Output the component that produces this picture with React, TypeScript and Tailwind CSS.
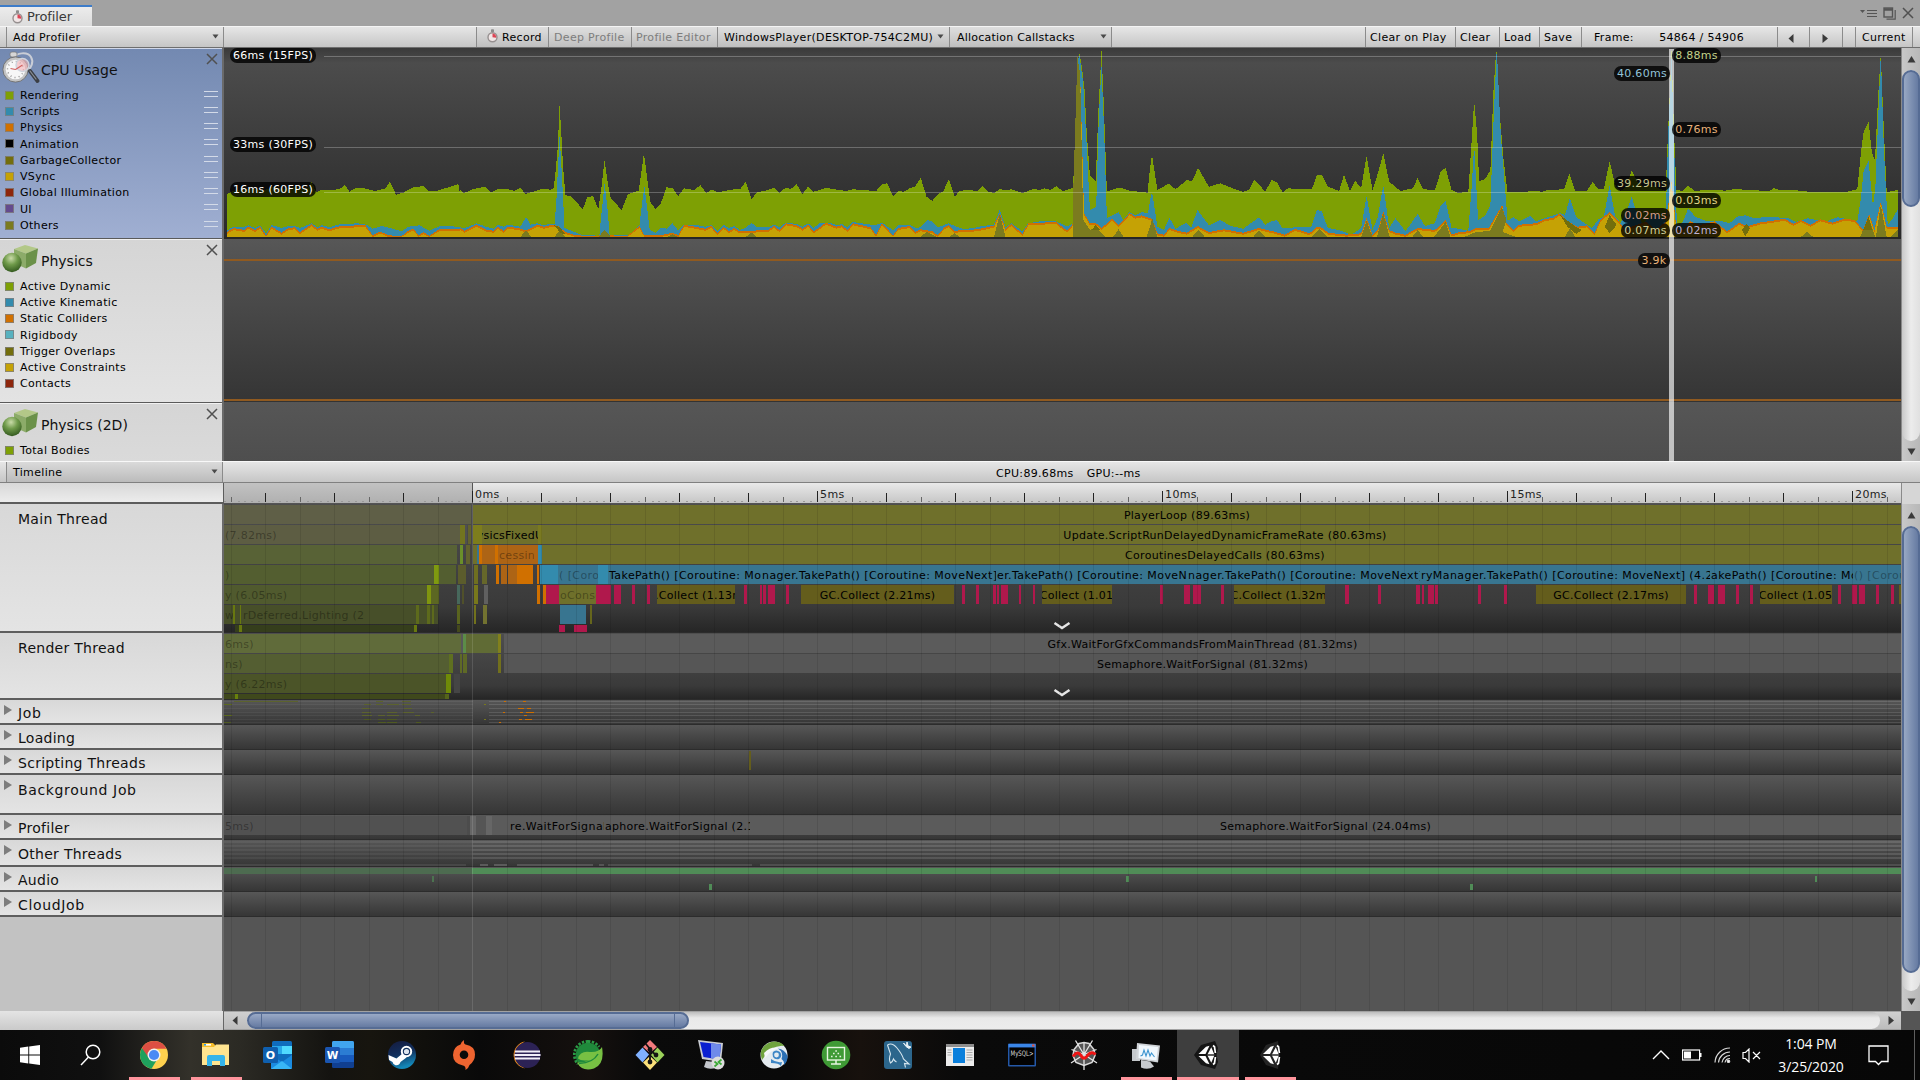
import React from "react";

/* ------------------------------------------------------------------ */
/* Shared pieces                                                       */
/* ------------------------------------------------------------------ */

const CANVAS_X = 224;
const MS = 69;
const ZERO = 472.1;

function Caret({ className = "" }: { className?: string }) {
  return (
    <svg width="7" height="5" viewBox="0 0 7 5" className={className}>
      <path d="M0.5 0.5h6L3.5 4.5z" fill="#4a4a4a" />
    </svg>
  );
}

function Arrow({ dir }: { dir: "up" | "down" | "left" | "right" }) {
  const d = {
    up: "M0.5 7.5h8L4.5 1z",
    down: "M0.5 1.5h8L4.5 8z",
    left: "M6.5 0v9L1.5 4.5z",
    right: "M2.5 0v9L8 4.5z",
  }[dir];
  return (
    <svg width="9" height="9" viewBox="0 0 9 9" className="shrink-0">
      <path d={d} fill="#3a3a3a" />
    </svg>
  );
}

function Stopwatch() {
  return (
    <svg width="11" height="14" viewBox="0 0 11 14" className="shrink-0">
      <rect x="4" y="0.3" width="3" height="3" rx="0.8" fill="#8c8c8c" />
      <circle cx="5.5" cy="8.200" r="4.500" fill="#f0e6e6" stroke="#969090" strokeWidth="1.400" />
      <path d="M5.500 8.200V4.400A3.800 3.800 0 0 1 9.200 8.800z" fill="#dd4455" />
    </svg>
  );
}

function CpuIcon() {
  return (
    <svg width="38" height="34" viewBox="0 0 38 34" className="shrink-0">
      <path d="M12 7C14 2 25 0 29 6c3 5 0 11-3 13" fill="none" stroke="#c9cdd6" strokeWidth="2" />
      <rect x="8" y="1" width="7" height="5" rx="2" fill="#d6d6d6" stroke="#777" strokeWidth="0.7" />
      <circle cx="13.500" cy="18.500" r="12.600" fill="#c4c4c4" stroke="#6d6d6d" strokeWidth="0.9" />
      <circle cx="13.500" cy="18.500" r="9.800" fill="#f7f7f7" />
      <circle cx="13.500" cy="18.500" r="8" fill="none" stroke="#777" strokeWidth="1.400" strokeDasharray="0.8 3.4" />
      <circle cx="20.500" cy="14" r="6.500" fill="#f3b0b6" fillOpacity="0.6" stroke="#cfd4dd" strokeWidth="1.400" />
      <path d="M13.500 18.500l7-4.500M13.500 18.500l-5-1" stroke="#d06060" strokeWidth="1.100" />
      <path d="M28 20l7.500 10" stroke="#3b3e44" strokeWidth="3.800" strokeLinecap="round" />
      <path d="M28 20l6 8" stroke="#8b8f96" strokeWidth="1.200" strokeLinecap="round" />
    </svg>
  );
}

function PhysicsIcon() {
  return (
    <svg width="37" height="30" viewBox="0 0 37 30" className="shrink-0">
      <defs>
        <radialGradient id="ball" cx="0.45" cy="0.28" r="0.75">
          <stop offset="0" stopColor="#c9dba8" />
          <stop offset="0.45" stopColor="#6f9a4a" />
          <stop offset="1" stopColor="#2f551c" />
        </radialGradient>
      </defs>
      <path d="M12 5L23 1l13 3.500-12 5z" fill="#b3c888" />
      <path d="M12 5l12 4.500v15L12 19z" fill="#8cab69" />
      <path d="M24 9.500l12-5L34 19 24 24.500z" fill="#6b9149" />
      <circle cx="10" cy="18.500" r="9.700" fill="url(#ball)" />
    </svg>
  );
}

function ThinCross({ size = 12 }: { size?: number }) {
  return (
    <svg width={size} height={size} viewBox="0 0 12 12">
      <path d="M1 1l10 10M11 1L1 11" stroke="#505050" strokeWidth="1.5" />
    </svg>
  );
}

/* ------------------------------------------------------------------ */
/* Window header and toolbar                                           */
/* ------------------------------------------------------------------ */

function TitleBar() {
  return (
    <div className="flex h-[26px] shrink-0 items-end justify-between bg-[#a2a2a2]">
      <div className="flex h-[21px] w-[92px] items-center gap-[4px] border-t-2 border-[#3d7cc9] bg-linear-to-b from-[#ececec] to-[#dcdcdc] pl-3 text-[13px] tracking-[-0.1px] text-[#3a3a3a]">
        <Stopwatch />
        <span>Profiler</span>
      </div>
      <div className="flex h-[26px] items-center gap-[6px] pr-[6px]">
        <svg width="17" height="9" viewBox="0 0 17 9">
          <path d="M0 1h5L2.500 4z" fill="#555" />
          <path d="M7 1.500h10M7 4.500h10M7 7.500h10" stroke="#555" strokeWidth="1" />
        </svg>
        <svg width="13" height="13" viewBox="0 0 13 13">
          <path d="M3.500 12.200h8.700V3" fill="none" stroke="#555" strokeWidth="1.200" />
          <rect x="1" y="1" width="8.500" height="9" fill="#a2a2a2" stroke="#555" strokeWidth="1.400" />
          <path d="M1 2.500h8.500" stroke="#555" strokeWidth="2.500" />
        </svg>
        <ThinCross size={12} />
      </div>
    </div>
  );
}

const barFill = "bg-linear-to-b from-[#e6e6e6] to-[#c6c6c6]";

function Cell({ className, children }: { className: string; children?: React.ReactNode }) {
  return (
    <div className={"flex h-full shrink-0 items-center overflow-hidden border-r border-[#8b8b8b] pt-[2px] whitespace-nowrap " + className}>
      {children}
    </div>
  );
}

function Toolbar() {
  return (
    <div className={"flex h-[22px] shrink-0 border-t border-b border-t-[#f4f4f4] border-b-[#6e6e6e] text-[11px] tracking-[0.32px] text-black " + barFill}>
      <Cell className="w-[7px]" />
      <Cell className="w-[217px] justify-between pr-[4px] pl-[6px]">
        <span>Add Profiler</span>
        <Caret className="-mt-[4px]" />
      </Cell>
      <Cell className="w-[253px]" />
      <Cell className="w-[72px] gap-[4px] bg-black/3 pl-[10px]">
        <span className="-mt-[4px]"><Stopwatch /></span>
        <span>Record</span>
      </Cell>
      <Cell className="w-[83px] bg-black/3 pl-[5px] text-[#7d7d7d]">Deep Profile</Cell>
      <Cell className="w-[86px] bg-black/3 pl-[4px] text-[#7d7d7d]">Profile Editor</Cell>
      <Cell className="w-[232px] justify-between bg-black/3 pr-[5px] pl-[6px]">
        <span>WindowsPlayer(DESKTOP-754C2MU)</span>
        <Caret className="-mt-[4px]" />
      </Cell>
      <Cell className="w-[162px] justify-between bg-black/3 pr-[4px] pl-[7px] tracking-[0.22px]">
        <span>Allocation Callstacks</span>
        <Caret className="-mt-[4px]" />
      </Cell>
      <Cell className="w-[254px]" />
      <Cell className="w-[90px] pl-[4px]">Clear on Play</Cell>
      <Cell className="w-[44px] pl-[4px]">Clear</Cell>
      <Cell className="w-[40px] pl-[4px]">Load</Cell>
      <Cell className="w-[42px] pl-[4px]">Save</Cell>
      <Cell className="w-[196px] justify-between pr-[33px] pl-[12px]">
        <span>Frame:</span>
        <span>54864 / 54906</span>
      </Cell>
      <Cell className="w-[32px] pl-[9px]"><Arrow dir="left" /></Cell>
      <Cell className="w-[33px] pl-[10px]"><Arrow dir="right" /></Cell>
      <Cell className="w-[13px]" />
      <Cell className="w-[57px] pl-[6px]">Current</Cell>
    </div>
  );
}

/* ------------------------------------------------------------------ */
/* Legend column                                                       */
/* ------------------------------------------------------------------ */

const cpuLegend = [
  ["Rendering", "#7ea004"],
  ["Scripts", "#338bad"],
  ["Physics", "#d17000"],
  ["Animation", "#000000"],
  ["GarbageCollector", "#736e0c"],
  ["VSync", "#c5a205"],
  ["Global Illumination", "#8e260c"],
  ["UI", "#644a8e"],
  ["Others", "#7b7b1f"],
];

const physicsLegend = [
  ["Active Dynamic", "#7ea004"],
  ["Active Kinematic", "#338bad"],
  ["Static Colliders", "#d17000"],
  ["Rigidbody", "#57b1bf"],
  ["Trigger Overlaps", "#736e0c"],
  ["Active Constraints", "#c5a205"],
  ["Contacts", "#8e260c"],
];

function Module({ title, icon, legend, grips, className }: {
  title: string;
  icon: React.ReactNode;
  legend: string[][];
  grips?: boolean;
  className: string;
}) {
  return (
    <div className={"relative shrink-0 overflow-hidden border-t border-b border-t-white/50 border-b-[#5a5a5a] " + className}>
      <div className="flex h-[38px] items-center gap-px pl-[2px]">
        <div className="flex h-[36px] w-[38px] items-center">{icon}</div>
        <span className="pt-[4px] text-[14px] text-[#111]">{title}</span>
      </div>
      <div className="absolute top-[4px] right-[4px]"><ThinCross /></div>
      <div>
        {legend.map(([name, color]) => (
          <div key={name} className="flex h-[16.25px] items-center pl-[5px] text-[11px] tracking-[0.32px]">
            <span className="mr-[6px] h-[9px] w-[9px] border border-[#808080]/80" style={{ backgroundColor: color }} />
            <span className="flex-1 pt-[2px]">{name}</span>
            {grips && (
              <span className="mr-[4px] mb-[3px] h-[6px] w-[14px] border-t border-b border-[#d3dae8]" />
            )}
          </div>
        ))}
      </div>
    </div>
  );
}

function ModuleColumn() {
  return (
    <div className="flex w-[224px] shrink-0 flex-col overflow-hidden border-r-2 border-[#6a6a6a] bg-[#d8d8d8]">
      <Module title="CPU Usage" icon={<CpuIcon />} legend={cpuLegend} grips
        className="h-[191px] bg-linear-to-b from-[#7389b1] to-[#a0afd2]" />
      <Module title="Physics" icon={<PhysicsIcon />} legend={physicsLegend}
        className="h-[164px] bg-linear-to-b from-[#d5d5d5] to-[#e3e3e3]" />
      <Module title="Physics (2D)" icon={<PhysicsIcon />} legend={[["Total Bodies", "#7ea004"]]}
        className="h-[164px] bg-linear-to-b from-[#d5d5d5] to-[#e3e3e3]" />
    </div>
  );
}

/* ------------------------------------------------------------------ */
/* CPU chart                                                           */
/* ------------------------------------------------------------------ */

/* Each run is an origin, a horizontal sample density, and "x,y" samples (three units per pixel vertically). */
type Run = [number, number, string];

const renderingRuns: Run[] = [
  [0, 3, "681,583 700,572 720,570 760,566 790,572 820,560 850,568 880,562 920,568 935,545 948,577 965,570 985,570 1018,568 1035,554 1048,575 1068,564 1090,564 1125,573 1155,566 1170,545 1188,584 1210,578 1240,562 1272,558 1285,573 1308,573 1345,562 1375,552 1379,577"],
  [460, 2.24, "0,570 8,580 28,568 57,560 70,577 85,568 108,568 122,573 135,564 147,582 185,566 202,569 210,564 214,515 219,440 223,312 227,400 231,500 236,585 250,590 275,628 285,592 298,588 310,628 317,560 324,480 330,540 337,592 362,630 376,583 400,572 407,510 412,460 418,520 426,605 438,628 450,610 462,562 476,564 489,588 502,565 524,570 539,556 552,580 564,568 577,577 614,568 627,568 640,546 653,597 665,577 690,570 703,563 716,579 729,563 741,567 754,552 767,583 779,560 792,575 820,564 866,573 880,568 932,573 945,553 957,550 970,588 982,573 994,575 1007,565 1019,560 1032,533 1045,590 1058,603 1070,583 1083,573 1095,537 1108,590 1120,572 1145,570 1158,574 1170,558 1184,575 1196,579 1210,567 1222,571 1234,568 1260,579 1285,567 1298,570 1310,565 1323,570 1336,558 1350,574 1373,563 1377,460 1382,320 1387,155 1394,210 1399,270 1404,400 1411,525 1424,545 1430,330 1437,152 1442,310 1449,575 1475,563 1490,567 1500,572 1540,578 1546,500"],
  [1150, 2.036, "4,465 15,570 38,551 52,568 75,540 86,543 98,504 120,560 143,550 165,563 190,576 203,568 212,538 235,575 247,540 258,546 270,577 282,564 296,568 330,566 340,524 350,526 362,560 385,573 395,524 407,573 418,543 430,563 441,468 453,570 464,520 475,460 487,545 510,573 535,565 545,534 556,568 580,570 592,514 602,504 614,570 625,578 648,577 655,420 660,303 666,400 670,543 682,538 693,510 699,280 705,144 712,340 720,480 728,577 760,577 775,573 800,575 810,570 843,568 854,520 866,574 890,572 901,546 913,567 924,568 936,483 947,555 958,573 970,560 981,510 992,545 1004,560 1015,555 1027,560 1050,573 1054,420 1062,148 1067,400 1072,570 1085,573 1096,557 1108,572 1155,570 1170,572 1190,567 1220,570 1260,573 1270,565 1285,571 1310,570 1340,575 1420,575 1440,568 1448,450 1453,395 1463,366 1470,460 1476,480 1482,300 1488,162 1493,350 1500,577 1522,570"],
];

const scriptRuns: Run[] = [
  [0, 3, "681,692 700,680 735,680 745,676 765,684 780,676 798,700 815,675 845,684 865,678 885,678 900,684 935,670 952,682 965,676 990,682 1010,674 1072,670 1100,674 1118,686 1145,678 1170,684 1205,694 1225,680 1258,676 1288,692 1320,678 1378,680"],
  [460, 2.24, "0,682 10,685 37,670 62,682 75,686 85,674 97,680 108,674 135,680 148,651 158,674 173,670 188,676 202,671 212,672 216,600 223,405 229,540 234,684 260,698 275,706 300,706 312,708 317,640 324,550 330,620 335,704 375,706 390,694 402,674 407,620 413,558 418,610 425,690 438,698 452,682 462,686 476,670 489,692 500,674 525,674 550,680 563,676 577,692 590,674 602,684 614,678 627,690 640,684 653,668 665,682 690,682 703,674 716,682 730,668 755,672 767,680 780,670 792,684 806,668 830,668 843,676 855,672 868,682 880,666 930,676 945,668 958,680 970,690 982,676 1007,674 1020,684 1032,682 1046,660 1058,664 1070,682 1095,670 1108,678 1130,688 1158,682 1170,678 1196,674 1209,630 1222,682 1235,670 1260,694 1273,670 1300,664 1335,664 1360,680 1373,670 1376,540 1383,200 1387,160 1396,250 1404,440 1411,630 1425,620 1431,350 1437,200 1443,400 1449,655 1475,637 1486,660 1500,636 1512,646 1527,636 1541,640 1546,600"],
  [1150, 2.036, "4,574 15,680 28,690 40,654 52,686 74,668 84,682 97,630 120,676 143,660 165,678 190,686 222,652 235,674 247,664 258,660 270,684 328,680 340,630 350,634 362,684 385,690 410,704 430,684 441,588 453,690 464,650 475,555 487,684 500,655 520,694 545,642 560,678 580,670 592,616 602,603 614,684 628,686 648,692 655,560 660,435 668,660 682,648 693,615 699,380 706,144 714,400 728,662 740,652 752,664 774,648 786,664 805,654 835,640 845,645 855,594 868,652 880,664 900,684 913,658 924,650 936,555 947,650 958,668 970,640 981,588 992,650 1004,670 1027,640 1050,660 1055,400 1062,170 1066,400 1073,680 1085,665 1096,625 1110,650 1130,662 1160,662 1180,670 1195,650 1212,646 1230,655 1260,650 1300,655 1315,665 1340,655 1375,665 1400,652 1440,664 1447,600 1453,510 1463,484 1472,620 1477,560 1483,340 1488,162 1494,440 1502,674 1510,660 1522,630"],
];

const physicsRuns: Run[] = [
  [0, 3, "681,696 700,684 735,690 745,680 765,690 780,680 798,706 815,680 845,698 865,684 885,682 900,696 935,673 952,686 965,680 990,688 1010,680 1072,676 1095,674 1118,706 1140,694 1165,706 1205,708 1225,692 1240,686 1256,706 1270,696 1288,708 1320,686 1378,688"],
  [460, 2.24, "0,684 10,692 37,674 60,690 75,692 85,680 97,692 108,680 130,684 148,692 173,674 188,680 202,676 212,674 222,680 236,696 260,706 300,708 315,706 324,690 333,706 375,708 402,678 413,706 450,706 476,698 489,706 502,674 550,686 563,678 577,700 590,680 602,694 614,684 627,694 653,692 690,690 703,678 716,690 730,670 755,676 767,686 780,674 792,694 820,668 843,680 855,676 868,690 880,670 920,682 932,706 945,670 970,706 982,684 1007,678 1020,696 1032,688 1058,694 1070,706 1085,682 1095,676 1108,692 1160,688 1185,680 1196,678 1209,640 1222,686 1235,672 1260,702 1273,670 1335,666 1360,692 1373,672 1378,460 1384,170 1390,260 1398,640 1411,670 1425,670 1437,684 1461,656 1475,676 1500,640 1512,650 1527,646 1545,655"],
  [1150, 2.036, "4,656 15,700 28,704 40,684 60,694 75,698 97,678 120,696 150,688 190,698 222,684 250,694 275,704 295,686 325,700 340,680 352,684 362,698 400,704 430,700 441,654 453,705 464,690 475,635 487,690 500,698 520,704 545,684 580,690 602,660 614,704 630,696 650,694 665,684 690,684 705,645 717,615 725,668 740,690 752,674 774,672 790,668 805,656 820,655 835,640 852,665 870,680 890,676 905,700 917,660 936,635 955,665 970,695 980,680 1010,665 1030,690 1050,665 1062,545 1072,690 1085,690 1100,664 1120,675 1150,664 1175,694 1200,668 1215,680 1240,668 1260,664 1293,656 1310,672 1325,660 1345,674 1365,658 1390,668 1415,656 1435,660 1452,690 1464,642 1475,690 1488,605 1500,680 1522,680"],
];

const otherRuns: Run[] = [
  [460, 2.24, "135,711 148,690 160,711"],
  [460, 2.24, "212,711 222,692 236,711"],
  [460, 2.24, "310,711 324,690 338,711"],
  [460, 2.24, "465,711 476,702 489,711"],
  [460, 2.24, "640,711 653,698 665,711"],
  [460, 2.24, "1030,711 1046,696 1068,711"],
  [460, 2.24, "1095,711 1108,700 1120,711"],
  [460, 2.24, "1196,711 1209,642 1222,711"],
  [460, 2.24, "1374,711 1374,560 1383,170 1389,220 1396,660 1411,690 1425,680 1445,711"],
  [460, 2.24, "1463,711 1475,688 1487,711"],
  [460, 2.24, "1538,711 1551,656 1562,711"],
  [1150, 2.036, "0,711 4,662 15,711"],
  [1150, 2.036, "86,711 98,690 112,711"],
  [1150, 2.036, "210,711 222,690 235,711"],
  [1150, 2.036, "328,711 345,688 362,711"],
  [1150, 2.036, "430,711 441,662 453,711"],
  [1150, 2.036, "462,711 475,640 488,711"],
  [1150, 2.036, "534,711 545,690 556,711"],
  [1150, 2.036, "578,711 602,666 612,711"],
  [1150, 2.036, "640,711 665,695 692,694 716,622 726,660 718,696 745,711"],
  [1150, 2.036, "845,711 855,684 866,711"],
  [1150, 2.036, "1325,711 1338,695 1350,711"],
  [1150, 2.036, "1446,711 1463,650 1476,711"],
  [1150, 2.036, "1478,711 1488,615 1500,711"],
  [1150, 2.036, "1508,711 1522,690 1522,711"],
];

const collectorRuns: Run[] = [
  [460, 2.24, "210,676 222,680 236,702 226,700"],
  [460, 2.24, "1415,690 1424,674 1434,690"],
  [1150, 2.036, "835,645 870,684 880,690 868,702 850,680"],
  [1150, 2.036, "926,680 936,645 950,675 936,700"],
  [1150, 2.036, "1205,690 1214,672 1222,685 1212,708"],
  [1150, 2.036, "1452,690 1463,650 1470,690"],
];

function points(runs: Run[], drop = 0) {
  return runs.flatMap(([origin, density, samples]) =>
    samples.split(" ").map((s) => {
      const [x, y] = s.split(",").map(Number);
      return (origin + x / density).toFixed(1) + "," + Math.min(237, (y + drop) / 3).toFixed(1);
    })
  ).join(" ");
}

function CpuChart() {
  const area = (runs: Run[], drop = 0) => "227,237 " + points(runs, drop) + " 1897.5,237";
  return (
    <svg width="1677" height="190" viewBox="224 48 1677 190" className="block" shapeRendering="crispEdges">
      <polygon points={area(renderingRuns)} fill="#7ea004" />
      <polygon points={area(scriptRuns)} fill="#338bad" />
      <polygon points={area(physicsRuns)} fill="#d17000" />
      <polygon points={area(physicsRuns, 6)} fill="#c5a205" />
      {otherRuns.map((r, i) => <polygon key={i} points={points([r])} fill="#7b7b1f" />)}
      {collectorRuns.map((r, i) => <polygon key={i} points={points([r])} fill="#736e0c" />)}
      <path d="M324 56.500H1901M324 147.500H1901M324 192.500H1901" stroke="#ffffff" strokeOpacity="0.25" />
    </svg>
  );
}

function Pill({ children, className }: { children: React.ReactNode; className: string }) {
  return (
    <span className={"absolute flex h-[15px] items-center justify-center rounded-[7px] bg-black/80 pt-[2px] text-[11px] tracking-[0.3px] whitespace-nowrap " + className}>
      {children}
    </span>
  );
}

function Charts() {
  return (
    <div className="relative flex-1 overflow-hidden bg-[#555]">
      <div className="h-[191px] border-b-2 border-[#262626] bg-linear-to-b from-[#3a3a3a] via-[#4c4c4c] via-8% to-[#2a2a2a]">
        <CpuChart />
      </div>
      <div className="flex h-[163px] flex-col justify-between border-b border-[#333] bg-linear-to-b from-[#575757] to-[#353535] pt-[20px]">
        <div className="h-[2px] bg-[#905a20]" />
        <div className="h-[2px] bg-[#905a20]" />
      </div>
      <div className="h-[60px] bg-linear-to-b from-[#565656] to-[#4e4e4e]" />

      <div className="absolute top-[1px] left-[1445px] h-full w-[5px] bg-white/65" />
      <Pill className="top-0 left-[6px] w-[86px] text-white">66ms (15FPS)</Pill>
      <Pill className="top-[89px] left-[6px] w-[86px] text-white">33ms (30FPS)</Pill>
      <Pill className="top-[134px] left-[6px] w-[86px] text-white">16ms (60FPS)</Pill>
      <Pill className="top-0 left-[1448px] w-[49px] text-[#c3d28a]">8.88ms</Pill>
      <Pill className="top-[74px] left-[1448px] w-[49px] text-[#e8b279]">0.76ms</Pill>
      <Pill className="top-[145px] left-[1448px] w-[49px] text-[#e0d589]">0.03ms</Pill>
      <Pill className="top-[175px] left-[1448px] w-[49px] text-[#beb1d3]">0.02ms</Pill>
      <Pill className="top-[18px] left-[1390px] w-[56px] text-[#92c3d8]">40.60ms</Pill>
      <Pill className="top-[128px] left-[1390px] w-[56px] text-[#c6c48c]">39.29ms</Pill>
      <Pill className="top-[160px] left-[1397px] w-[49px] text-[#d29c8c]">0.02ms</Pill>
      <Pill className="top-[175px] left-[1397px] w-[49px] text-[#cfcf98]">0.07ms</Pill>
      <Pill className="top-[205px] left-[1414px] w-[32px] text-[#e8b279]">3.9k</Pill>
    </div>
  );
}

function VScroll({ thumb, tail }: { thumb: string; tail: string }) {
  return (
    <div className="flex w-[19px] shrink-0 flex-col items-center border-l border-[#8a8a8a] bg-linear-to-r from-[#c8c8c8] to-[#b8b8b8]">
      <div className="flex h-[22px] items-center"><Arrow dir="up" /></div>
      <div className={"w-full rounded-[9px] bg-linear-to-r from-[#c9c9c9] via-[#ececec] to-[#e0e0e0] " + tail}>
        <div className={"w-full rounded-[9px] border-2 border-[#566c94] bg-linear-to-r from-[#98a8c3] to-[#667ba2] " + thumb} />
      </div>
      <div className="flex flex-1 items-center"><Arrow dir="down" /></div>
    </div>
  );
}

/* ------------------------------------------------------------------ */
/* Timeline                                                            */
/* ------------------------------------------------------------------ */

function TimelineToolbar() {
  return (
    <div className={"flex h-[22px] shrink-0 border-t border-b border-t-[#f8f8f8] border-b-[#808080] text-[11px] tracking-[0.33px] " + barFill}>
      <Cell className="w-[7px]" />
      <Cell className="w-[216px] justify-between bg-black/5 pr-[4px] pl-[6px]">
        <span className="pt-px">Timeline</span>
        <Caret className="-mt-[3px]" />
      </Cell>
      <div className="flex flex-1 items-center gap-[13px] pt-[5px] pl-[773px]">
        <span>CPU:89.68ms</span>
        <span>GPU:--ms</span>
      </div>
    </div>
  );
}

function Ruler() {
  const ticks = [];
  for (let i = -36; i <= 206; i++) {
    const x = Math.round(ZERO + (i * MS) / 10) - CANVAS_X;
    const h = i % 50 === 0 ? 11 : i % 10 === 0 ? 9 : i % 5 === 0 ? 5 : 1;
    ticks.push(
      <span key={i} className={"absolute bottom-[1px] " + (h === 1 ? "bg-[#999]" : h === 5 ? "bg-[#666]" : "bg-[#222]")}
        style={{ left: x, height: h, width: h > 1 ? 1 : 2 }} />
    );
  }
  return (
    <div className="flex h-[21px] shrink-0">
      <div className="w-[224px] border-r border-b-2 border-[#5c5c5c] bg-linear-to-b from-[#d8d8d8] to-[#ececec]" />
      <div className="relative flex-1 border-b border-[#555] bg-linear-to-b from-[#e9e9e9] to-[#c6c6c6]">
        <div className="absolute top-0 left-0 h-full w-[249px] border-r border-[#555] bg-linear-to-b from-[#c2c2c2] to-[#b0b0b0]" />
        {ticks}
        {[0, 5, 10, 15, 20].map((t) => (
          <span key={t} className="absolute top-[5px] text-[11px] leading-[14px] tracking-[0.3px] text-[#222]"
            style={{ left: ZERO + t * MS + 3 - CANVAS_X }}>{t}ms</span>
        ))}
      </div>
      <div className="w-[19px] border-l border-[#8a8a8a] bg-[#d6d6d6]" />
    </div>
  );
}

/* start x, end x, colour, optional label, optional flags ("d" dimmed, "l" left aligned, "w" wide spacing) */
type Bar = [number, number, string, string?, string?];

const OLIVE = "#6f702b";
const LEAF = "#586236";
const BLUE = "#387590";
const GC = "#645d1c";
const PINK = "#b0184c";
const ORANGE = "#d07000";
const RUST = "#ad6415";
const GREY = "#5b5b5b";

const pinkSpans: [number, number][] = [
  [546, 559], [596, 611], [614, 621], [632, 635], [647, 650], [744, 747], [760, 762], [763, 766], [768, 775], [786, 789],
  [962, 965], [976, 979], [993, 996], [997, 999], [1001, 1008], [1019, 1021], [1033, 1035], [1160, 1163], [1184, 1190],
  [1193, 1201], [1221, 1224], [1345, 1349], [1378, 1381], [1416, 1420], [1422, 1424], [1428, 1434], [1435, 1438],
  [1478, 1481], [1504, 1507], [1694, 1697], [1708, 1714], [1718, 1725], [1736, 1739], [1750, 1753], [1838, 1841],
  [1852, 1857], [1859, 1865], [1876, 1879], [1891, 1894],
];

const mainRows: Bar[][] = [
  [[224, 471, "#5f5f47"], [473, 1901, OLIVE, "PlayerLoop (89.63ms)"]],
  [[224, 460, "#5d5d43", "(7.82ms)", "dl"], [460, 465, "#72741f"], [465, 467, "#505050"], [468, 471, "#62622e"],
    [473, 482, "#7d7d1c"], [482, 538, OLIVE, "ysicsFixedU"], [538, 542, "#7a7a20"], [542, 1908, OLIVE, "Update.ScriptRunDelayedDynamicFrameRate (80.63ms)"]],
  [[224, 457, LEAF], [460, 463, "#6a8f2a"], [466, 470, "#62622e"], [473, 477, OLIVE], [477, 479, BLUE], [479, 482, ORANGE], [482, 496, RUST], [495, 498, ORANGE],
    [498, 534, RUST, "cessin", "dl"], [534, 538, RUST], [538, 542, "#338bad"], [542, 1908, OLIVE, "CoroutinesDelayedCalls (80.63ms)"]],
  [[224, 434, "#535e30", ")", "dl"], [434, 439, "#7f9a10"], [439, 456, "#535e30"], [458, 466, "#5b5c2c"], [474, 478, "#6f6f20"], [482, 487, "#66672a"],
    [496, 499, ORANGE], [501, 507, RUST], [508, 517, RUST], [517, 533, ORANGE], [537, 539, ORANGE],
    [540, 558, "#338bad"], [558, 598, BLUE, "( [Coroutine", "dlw"], [598, 608, "#338bad"],
    [608, 761, BLUE, "TakePath() [Coroutine: MoveNext", "lw"],
    [761, 996, BLUE, "nager.TakePath() [Coroutine: MoveNext]", "lw"],
    [996, 1187, BLUE, "er.TakePath() [Coroutine: MoveNext]", "lw"],
    [1187, 1420, BLUE, "nager.TakePath() [Coroutine: MoveNext]", "lw"],
    [1420, 1710, BLUE, "ryManager.TakePath() [Coroutine: MoveNext] (4.25ms)", "lw"],
    [1710, 1853, BLUE, "akePath() [Coroutine: MoveNext]", "lw"],
    [1853, 1901, BLUE, "() [Coroutine", "dlw"]],
  [[224, 427, "#505a2e", "y (6.05ms)", "dl"], [427, 431, "#7f950f"], [431, 439, "#5c6722"], [457, 460, "#47685c"], [462, 464, "#50502a"],
    [474, 478, "#78781c"], [484, 488, "#606060"], [537, 540, ORANGE], [543, 546, ORANGE],
    [559, 596, OLIVE, "oConso", "dl"],
    ...pinkSpans.map(([a, b]): Bar => [a, b, PINK]),
    [657, 735, GC, "GC.Collect (1.13ms)"], [801, 954, GC, "GC.Collect (2.21ms)"], [1042, 1112, GC, "GC.Collect (1.01ms)"],
    [1234, 1325, GC, "GC.Collect (1.32ms)"], [1536, 1686, GC, "GC.Collect (2.17ms)"], [1760, 1832, GC, "GC.Collect (1.05ms)"], [1899, 1901, GC]],
  [[224, 438, "#474f29"], [224, 233, "#474f29", "wn", "dl"], [233, 235, "#68780f"], [240, 241, "#68780f"], [242, 364, "transparent", "rDeferred.Lighting (2", "dl"],
    [416, 419, "#5d6a1c"], [427, 430, "#5d6a1c"], [432, 434, "#5d6a1c"], [457, 460, "#5a641f"], [474, 476, "#72721c"], [483, 487, "#727230"],
    [560, 586, BLUE], [590, 592, "#66661c"]],
  [[235, 417, "#353e1c"], [239, 242, "#68780f"], [414, 417, "#68780f"], [457, 460, "#44491c"], [559, 565, PINK], [574, 587, PINK]],
];

const renderRows: Bar[][] = [
  [[224, 461, "#606b3a", "6ms)", "dl"], [461, 463, "#585858"], [463, 466, "#5c8c48"], [466, 498, "#606b35"], [498, 501, "#82801c"], [504, 1901, GREY, "Gfx.WaitForGfxCommandsFromMainThread (81.32ms)"]],
  [[224, 449, "#545e32", "ns)", "dl"], [449, 453, "#5f7020"], [460, 462, "#5f6a26"], [463, 467, "#5f6a26"], [498, 501, "#72701c"], [504, 1901, "#565656", "Semaphore.WaitForSignal (81.32ms)"]],
  [[224, 446, "#4b5428", "y (6.22ms)", "dl"], [446, 451, "#6f8a08"], [454, 460, "#454545"]],
  [[224, 449, "#3f481c"], [235, 238, "#68800c"], [445, 449, "#55641a"]],
];

const profilerRow: Bar[][] = [[
  [224, 467, "#515151", "5ms)", "dl"], [467, 472, "#4c4c4c"], [470, 476, "#666"], [476, 486, "#555"], [486, 492, "#666"], [492, 509, GREY],
  [509, 604, GREY, "re.WaitForSignal (1.4", "lw"], [604, 750, GREY, "aphore.WaitForSignal (2.1", "l"],
  [750, 1901, GREY, "Semaphore.WaitForSignal (24.04ms)"],
]];

function Rows({ rows }: { rows: Bar[][] }) {
  return (
    <>
      {rows.map((row, r) => (
        <div key={r} className="relative mb-px h-[19px] w-full shrink-0">
          {row.map(([a, b, color, label, flags = ""], i) => (
            <div key={i}
              className={"absolute top-0 flex h-full items-center overflow-hidden pt-[3px] text-[11px] whitespace-nowrap " +
                (flags.includes("l") ? "justify-start pl-px " : "justify-center ") +
                (flags.includes("w") ? "tracking-[0.42px] " : "tracking-[0.28px] ") +
                (flags.includes("d") ? "text-black/35" : "text-black")}
              style={{ left: a - CANVAS_X, width: b - a, backgroundColor: color }}>
              {label && <span className="shrink-0">{label}</span>}
            </div>
          ))}
        </div>
      ))}
    </>
  );
}

const jobDashRows: [number, [number, number, string][]][] = [
  [1, [[234, 298, "#5c632e"], [376, 383, "#5c632e"], [402, 411, "#5c632e"], [504, 506, ORANGE], [523, 526, ORANGE]]],
  [4, [[224, 232, "#5c6a1e"], [364, 371, "#5c632e"], [376, 383, "#5c632e"], [387, 399, "#5c632e"], [402, 411, "#5c632e"], [484, 486, "#78781c"]]],
  [8, [[362, 370, "#5c632e"], [404, 412, "#5c632e"], [518, 524, ORANGE], [527, 531, ORANGE]]],
  [12, [[362, 371, "#5c632e"], [387, 397, "#5c632e"], [403, 414, "#5c632e"], [431, 434, "#5c632e"], [503, 505, ORANGE], [520, 523, ORANGE], [526, 534, ORANGE]]],
  [15, [[224, 232, "#5c6a1e"], [362, 372, "#5c632e"], [378, 385, "#5c632e"], [387, 399, "#5c632e"], [415, 420, "#5c632e"], [524, 527, ORANGE]]],
  [19, [[364, 371, "#4f5a22"], [378, 385, "#4f5a22"], [387, 397, "#4f5a22"], [484, 486, "#78781c"], [519, 522, ORANGE], [525, 532, ORANGE]]],
  [22, [[224, 231, "#4f5a22"], [378, 386, "#4f5a22"], [387, 397, "#4f5a22"], [416, 421, "#4f5a22"], [499, 501, ORANGE]]],
];

function Stripes({ ys, height, from = 0 }: { ys: number[]; height: number; from?: number }) {
  return (
    <>
      {ys.map((y) => (
        <React.Fragment key={y}>
          <span className="absolute left-0 w-[249px] bg-white/5" style={{ top: y, height }} />
          <span className="absolute right-0 bg-white/12" style={{ top: y, height, left: 249 + from }} />
        </React.Fragment>
      ))}
    </>
  );
}

function Mark({ x, w, y, h, color }: { x: number; w: number; y: number; h: number; color: string }) {
  return <span className="absolute" style={{ left: x - CANVAS_X, width: w, top: y, height: h, backgroundColor: color }} />;
}

function MoreChevron({ className }: { className: string }) {
  return (
    <svg width="18" height="10" viewBox="0 0 18 10" className={"absolute left-[829px] " + className}>
      <path d="M1.500 2l7.500 5 7.500-5" fill="none" stroke="#e6e6e6" strokeWidth="2.400" />
    </svg>
  );
}

const threads: { name: string; height: number; fold: boolean; pad: number; wide?: boolean; dark?: boolean; body?: React.ReactNode }[] = [
  { name: "Main Thread", height: 129, fold: false, pad: 6, dark: true, body: <><div className="pt-px"><Rows rows={mainRows} /></div><MoreChevron className="bottom-px" /></> },
  { name: "Render Thread", height: 67, fold: false, pad: 6, dark: true, body: <><div className="pt-px"><Rows rows={renderRows} /></div><MoreChevron className="bottom-px" /></> },
  {
    name: "Job", height: 25, fold: true, pad: 4, wide: true,
    body: <>
      <Stripes ys={[1, 4, 8, 12, 15, 19, 22]} height={1} from={16} />
      {jobDashRows.flatMap(([y, spans]) => spans.map(([a, b, c]) => <Mark key={y + "-" + a} x={a} w={b - a} y={y} h={1} color={c} />))}
    </>,
  },
  { name: "Loading", height: 25, fold: true, pad: 4 },
  { name: "Scripting Threads", height: 25, fold: true, pad: 4, body: <Mark x={749} w={2} y={1} h={19} color="#645d1c" /> },
  { name: "Background Job", height: 40, fold: true, pad: 6, wide: true },
  { name: "Profiler", height: 25, fold: true, pad: 4, body: <div className="pt-px"><Rows rows={profilerRow} /></div> },
  {
    name: "Other Threads", height: 27, fold: true, pad: 5,
    body: <>
      <Stripes ys={[1, 5, 9, 13, 17]} height={2} />
      {[[224, 466, "#474747"], [480, 488, GREY], [494, 507, GREY], [517, 593, "#555"], [599, 604, "#555"], [608, 752, "#4e4e4e"], [760, 1901, "#4e4e4e"]].map(([a, b, c]) => (
        <Mark key={String(a)} x={Number(a)} w={Number(b) - Number(a)} y={24} h={2} color={String(c)} />
      ))}
    </>,
  },
  {
    name: "Audio", height: 25, fold: true, pad: 4,
    body: <>
      <Mark x={224} w={248} y={1} h={6} color="#4d6b50" />
      <Mark x={472} w={1429} y={1} h={6} color="#508c57" />
      <Mark x={432} w={2} y={9} h={6} color="#4c7350" />
      <Mark x={709} w={3} y={17} h={6} color="#508c57" />
      <Mark x={1126} w={3} y={9} h={6} color="#508c57" />
      <Mark x={1470} w={3} y={17} h={6} color="#508c57" />
      <Mark x={1815} w={2} y={9} h={6} color="#508c57" />
    </>,
  },
  { name: "CloudJob", height: 25, fold: true, pad: 4, wide: true },
];

function Timeline() {
  const grid = [];
  for (let i = -7; i <= 41; i++) grid.push(Math.round(ZERO + (i * MS) / 2) - CANVAS_X);
  return (
    <div className="flex h-[507px] shrink-0">
      <div className="w-[224px] shrink-0 border-r-2 border-[#6a6a6a] bg-[#c2c2c2]">
        {threads.map((t) => (
          <div key={t.name} className="flex items-start border-b-2 border-[#5e5e5e] bg-linear-to-b from-[#d8d8d8] to-[#e4e4e4]" style={{ height: t.height }}>
            <span className="w-[18px] shrink-0 pt-[6px] pl-[3px]">
              {t.fold && (
                <svg width="9" height="10" viewBox="0 0 9 10" className="-mt-px"><path d="M1 0v10l8-5z" fill="#7d7d7d" /></svg>
              )}
            </span>
            <span className={"text-[14px] leading-[18px] whitespace-nowrap text-[#111] " + (t.wide ? "tracking-[0.65px]" : "tracking-[0.28px]")} style={{ paddingTop: t.pad }}>{t.name}</span>
          </div>
        ))}
      </div>
      <div className="relative flex-1 overflow-hidden bg-[#555]">
        {threads.map((t) => (
          <div key={t.name} style={{ height: t.height }}
            className={"relative overflow-hidden border-b border-[#2c2c2c] " +
              (t.dark
                ? "bg-linear-to-b from-[#4e4e4e] via-[#3a3a3a] via-80% to-[#262626]"
                : "bg-linear-to-b from-[#575757] to-[#363636]")}>
            {t.body}
          </div>
        ))}
        {grid.map((x) => (
          <span key={x} className={"absolute top-0 h-full w-px " + (x === 248 ? "bg-white/12" : "bg-black/9")} style={{ left: x }} />
        ))}
      </div>
      <VScroll tail="h-[465px]" thumb="h-[447px]" />
    </div>
  );
}

function HScroll() {
  return (
    <div className="flex h-[19px] shrink-0">
      <div className="w-[224px] border-r border-[#666] bg-linear-to-b from-[#e4e4e4] to-[#cacaca]" />
      <div className="flex flex-1 items-center border-t border-b border-[#a2a2a2] bg-linear-to-b from-[#d0d0d0] to-[#bcbcbc]">
        <div className="flex w-[23px] justify-center"><Arrow dir="left" /></div>
        <div className="h-full flex-1 rounded-[9px] bg-linear-to-b from-[#bdbdbd] via-[#e9e9e9] via-35% to-[#ececec]">
          <div className="flex h-full w-[442px] justify-between rounded-[9px] border-2 border-[#566c94] bg-linear-to-b from-[#99a9c6] to-[#667ba2] px-[12px]">
            <span className="w-px bg-[#566c94]" />
            <span className="w-px bg-[#566c94]" />
          </div>
        </div>
        <div className="flex w-[21px] justify-center"><Arrow dir="right" /></div>
      </div>
      <div className="w-[19px] bg-[#555]" />
    </div>
  );
}

/* ------------------------------------------------------------------ */
/* Taskbar                                                             */
/* ------------------------------------------------------------------ */

const ico = { width: 30, height: 30, viewBox: "0 0 30 30" };

const UnityMark = ({ small = false }: { small?: boolean }) => (
  <svg {...ico}>
    {small
      ? <path d="M5 15L11 5l12-4 1.500 14L23 29l-12-4z" fill="#242424" />
      : <path d="M1 15L8 5l14-4 3 7-1.500 7L25 22l-3 7-14-4z" fill="#151515" />}
    <g fill="#fff" transform={small ? "translate(2.500 0)" : ""}>
      <path d="M5.500 14l7.500-7.300 3.500-.9-4 8.200z" />
      <path d="M5.500 16l7.500 7.300 3.500.9-4-8.200z" />
      <path d="M18.300 7.200l3.200 7.800-3.200 7.800L14.200 15z" />
    </g>
    <path d="M14 15h8" stroke="#1b1b1b" strokeWidth="1.400" transform={small ? "translate(2.500 0)" : ""} />
    <path d="M20 5.500l1.500 1.300.9 6.200M20 24.500l1.500-1.300.9-6.200" stroke="#fff" strokeWidth="1.700" fill="none" transform={small ? "translate(2 0)" : ""} />
  </svg>
);

const icons: { id: string; open?: boolean; active?: boolean; art: React.ReactNode }[] = [
  {
    id: "chrome", open: true, art: (
      <svg {...ico}>
        <circle cx="15" cy="15" r="14" fill="#fdd04e" />
        <path d="M15 15L2.900 8A14 14 0 0 0 12.500 28.800L19 18z" fill="#1fa15d" />
        <path d="M2.900 8A14 14 0 0 1 27.500 8.700H15a6.300 6.300 0 0 0-6 8z" fill="#dd4f43" />
        <circle cx="15" cy="15" r="6.500" fill="#f1f1f1" />
        <circle cx="15" cy="15" r="5.100" fill="#4a8af4" />
      </svg>
    ),
  },
  {
    id: "explorer", open: true, art: (
      <svg {...ico}>
        <path d="M1 3h11l2 2v4H1z" fill="#f5bd2c" />
        <path d="M1 7h12l2-2.500h13V25H1z" fill="#ffe48f" />
        <rect x="3" y="4" width="7" height="1.600" fill="#fff" />
        <rect x="3" y="4" width="2" height="1.600" fill="#2c9bdc" />
        <path d="M6 26v-9q0-2 2-2h14q2 0 2 2v9h-5v-5h-8v5z" fill="#35b4ea" />
      </svg>
    ),
  },
  {
    id: "outlook", art: (
      <svg {...ico}>
        <rect x="9" y="1" width="20" height="27" rx="1.500" fill="#0f6cbd" />
        <rect x="9" y="6" width="10" height="8" fill="#28a8ea" />
        <rect x="19" y="6" width="10" height="8" fill="#50d9ff" />
        <path d="M8 15l11 7 10-7v12.500q0 1.500-1.500 1.500H8z" fill="#1a8be0" />
        <path d="M8 29l11-8 10 8z" fill="#38b6f5" />
        <rect x="0" y="7" width="15" height="16" rx="1.500" fill="#0f5fae" />
        <text x="7.500" y="19" fontSize="11" fontWeight="700" textAnchor="middle" fill="#fff">O</text>
      </svg>
    ),
  },
  {
    id: "word", art: (
      <svg {...ico}>
        <rect x="7" y="1" width="22" height="27" rx="1.500" fill="#103f91" />
        <path d="M7 2.500Q7 1 8.500 1h19Q29 1 29 2.500V8H7z" fill="#41a5ee" />
        <rect x="7" y="8" width="22" height="7" fill="#2b7cd3" />
        <rect x="7" y="15" width="22" height="7" fill="#185abd" />
        <rect x="0" y="7" width="15" height="16" rx="1.500" fill="#1a55b0" />
        <text x="7.500" y="19" fontSize="10.500" fontWeight="700" textAnchor="middle" fill="#fff">W</text>
      </svg>
    ),
  },
  {
    id: "steam", art: (
      <svg {...ico}>
        <defs><linearGradient id="stm" x1="0" y1="0" x2="0.300" y2="1"><stop offset="0" stopColor="#151a3d" /><stop offset="0.550" stopColor="#12305e" /><stop offset="1" stopColor="#1387b8" /></linearGradient></defs>
        <circle cx="15" cy="15" r="14" fill="url(#stm)" />
        <path d="M1.500 15l8 3.500 6-5 4 4-6 4.500q-1.500 4-5 3.200Q6 24.500 5.500 22L2 20z" fill="#fff" />
        <circle cx="19.500" cy="11.500" r="4.700" fill="#12305e" stroke="#fff" strokeWidth="2" />
        <circle cx="19.500" cy="11.500" r="2.600" fill="#dfe6ee" />
      </svg>
    ),
  },
  {
    id: "origin", art: (
      <svg {...ico}>
        <path fillRule="evenodd" d="M15 0q-3 2-3.500 4.500Q4 7 4 15q0 8.500 10 10.500 3 .5 2.500 4.500Q20 27.500 20.500 25 26 21 26 14.500 26 6 16.500 4.500 14.500 4 15 0zM15 10.500a4.300 4.300 0 1 1 0 8.600 4.300 4.300 0 0 1 0-8.600z" fill="#ee6430" />
      </svg>
    ),
  },
  {
    id: "eclipse", art: (
      <svg {...ico}>
        <path d="M14 1.500A13.700 13.700 0 0 0 14 28.500 15 15 0 0 1 14 1.500z" fill="#f7941e" />
        <circle cx="16.500" cy="15" r="13" fill="#2c2255" />
        <path d="M4 11.500h25M3.500 15h26M4 18.500h25" stroke="#f1eef8" strokeWidth="1.900" />
      </svg>
    ),
  },
  {
    id: "spring", art: (
      <svg {...ico}>
        <path d="M15 1.500A13.300 13.300 0 0 0 5 24" fill="none" stroke="#2a9a45" strokeWidth="2.800" strokeDasharray="2.400 1.400" />
        <path d="M15 1.500A13.300 13.300 0 0 1 26 7" fill="none" stroke="#2a9a45" strokeWidth="2.800" strokeDasharray="2.400 1.400" />
        <circle cx="15" cy="15" r="12.300" fill="#1f8a3b" />
        <path d="M29 7Q32 24 21 28.500 9 32 4 22.500 10 23 17 20 8 21.500 5 18.500 7 10.500 17 12 26 12.500 29 7z" fill="#77c043" />
        <path d="M6 23.500Q20 23 25 14" stroke="#1f8a3b" strokeWidth="1.500" fill="none" />
      </svg>
    ),
  },
  {
    id: "git", art: (
      <svg {...ico}>
        <path d="M15 0l7 7-7 6-7-6z" fill="#f27a7d" />
        <path d="M7.500 7.500L14 14.500 7.500 22.500.5 15z" fill="#80b1ff" />
        <path d="M22.500 7.500L29.500 15l-7 7.500L16 15z" fill="#9bd15a" />
        <path d="M15 16l7 6.500L15 30l-7-7.500z" fill="#fbe07a" />
        <path d="M10.500 3.500L15 9v13M15 10l6 5" stroke="#141414" strokeWidth="1.900" fill="none" />
        <circle cx="15" cy="9.500" r="2.400" fill="#141414" /><circle cx="21" cy="15" r="2.400" fill="#141414" /><circle cx="15" cy="22" r="2.400" fill="#141414" />
      </svg>
    ),
  },
  {
    id: "remote", art: (
      <svg {...ico}>
        <path d="M1 0l25 3-2 19L5 19z" fill="#c9ccd2" />
        <path d="M3 2l21 2.500-1.500 15L6.500 17z" fill="#0a1fd0" />
        <path d="M14 3.300l10 1.200-1.500 15-8.500-1.400z" fill="#6f8aea" />
        <path d="M9 21l8 1 2 6q-7 2-12-1z" fill="#c3c6cc" />
        <circle cx="21" cy="23" r="6.500" fill="#dcdcdc" />
        <path d="M17.500 21.500l3 2.500-3 2.500M24.500 19.500l-3 2.500 3 2.500" stroke="#3aa935" strokeWidth="1.700" fill="none" />
      </svg>
    ),
  },
  {
    id: "globe", art: (
      <svg {...ico}>
        <circle cx="15" cy="15" r="13.500" fill="#e4ebf0" />
        <path d="M2.500 10Q7 1.500 16 1.500q6 .3 9.500 4.500Q13 4 3 20 1 14 2.500 10z" fill="#6fa33e" />
        <path d="M5 13Q12 6 20 8 12 10 6 18z" fill="#f4f7f9" />
        <path d="M28.500 16q-3-7-9.500-7.500 6 4 3.500 10.500 3 2 2.500 6 4-4 3.500-9z" fill="#2b6fb4" />
        <path d="M14 12q3-3 7 0 3 4-1 7-4 1-6-2-1-3 0-5zM12 19q5 4 11 3l-1 4q-2-3-10-3z" fill="#3d86c6" />
        <circle cx="17.500" cy="15" r="2.400" fill="#e4ebf0" />
      </svg>
    ),
  },
  {
    id: "board", art: (
      <svg {...ico}>
        <circle cx="15" cy="15" r="14.300" fill="#3f9a35" />
        <rect x="6.500" y="7.500" width="17" height="12.500" fill="none" stroke="#e6f5e0" strokeWidth="1.400" />
        <path d="M15 20v3.500M10 24h10" stroke="#e6f5e0" strokeWidth="1.500" />
        <path d="M14.300 11h1.600M12 13.500h1.600M16.500 13.500h1.600M10 16.500h1.600M14.300 16.500h1.600M18.500 16.500h1.600" stroke="#e6f5e0" strokeWidth="1.600" />
      </svg>
    ),
  },
  {
    id: "workbench", art: (
      <svg {...ico}>
        <rect x="1" y="1" width="28" height="28" rx="3" fill="#2c668c" />
        <path d="M4.500 5Q9 2 14 8q5 6 6.500 11l5.500 5-4.500-.5 1 4" fill="none" stroke="#d7e7f0" strokeWidth="1.100" />
        <path d="M4.500 5q2 6 3 9-2 5 0 9 2-1 3-4 1 2 3 3" fill="none" stroke="#d7e7f0" strokeWidth="1.100" />
        <path d="M20.500 3l3 3 .5-4 1 4 3 1-2 1.500-3-2z" stroke="#e8f2f7" strokeWidth="1" fill="#e8f2f7" />
      </svg>
    ),
  },
  {
    id: "window", art: (
      <svg {...ico}>
        <rect x="1" y="4" width="28" height="22" fill="#ececec" />
        <rect x="1" y="4" width="28" height="3" fill="#8d8d8d" />
        <rect x="8" y="8" width="12" height="15" fill="#0a7fdc" />
        <path d="M2.500 10h4M2.500 12.500h4M2.500 15h4M21.500 10h6M21.500 12.500h6M21.500 15h6M21.500 17.500h6M21.500 20h6" stroke="#a9a9a9" strokeWidth="1" />
      </svg>
    ),
  },
  {
    id: "mysql", art: (
      <svg {...ico}>
        <rect x="1" y="3.500" width="28" height="23" rx="1" fill="#2458a8" />
        <rect x="1.500" y="4" width="27" height="3.500" fill="#3a86e8" />
        <rect x="2.500" y="7.500" width="25" height="17.500" fill="#020202" />
        <rect x="25" y="4.500" width="2.500" height="2" fill="#e0523a" />
        <text x="3.500" y="16" fontSize="7.500" textLength="23" lengthAdjust="spacingAndGlyphs" fill="#d8d8d8">MySQL&gt;</text>
      </svg>
    ),
  },
  {
    id: "web", art: (
      <svg {...ico}>
        <path d="M10 3.500l5-1 5 1 5 6 1 6-3 7-8 3-8-3-3-7 1-6z" fill="#555" stroke="#dcdcdc" strokeWidth="1.500" />
        <path d="M15 3v27M2.500 9.500l12.500 5 12.500-5M2 23l13-8.500L28 23M6.500.5L15 14.500 23.500.5" stroke="#e4e4e4" fill="none" strokeWidth="1.300" />
        <path d="M4 16.500q4.500-6.500 8-1 3 5.500 6.500 0 4-5 8-1" stroke="#f01414" strokeWidth="3" fill="none" />
      </svg>
    ),
  },
  {
    id: "monitor", open: true, art: (
      <svg {...ico}>
        <rect x="1" y="9" width="8" height="12" fill="#c4c8cc" />
        <path d="M6 3l23 2.500-2 17L5 19z" fill="#cfd3d7" />
        <path d="M8 5l19 2-1.500 13.500L7.500 18z" fill="#f1f8fd" />
        <path d="M9.500 16l2-1 1.500-5 2 6 2-6 2 6 1.500-3 3 4" stroke="#3d95d0" strokeWidth="1.100" fill="none" />
        <path d="M10 20l9 1.500 4 5q-6 4-13 1z" fill="#c6c9cd" />
      </svg>
    ),
  },
  { id: "unity-a", open: true, active: true, art: <UnityMark /> },
  { id: "unity-b", open: true, art: <UnityMark small /> },
];

function Taskbar() {
  return (
    <div className="flex h-[50px] shrink-0 bg-[linear-gradient(90deg,#0b0b0b_0,#101010_100px,#33312a_190px,#2b2a24_240px,#141310_330px,#17150f_370px,#090909_480px,#15100e_590px,#0a0a0a_640px,#090909_790px,#17110d_860px,#0a0a0a_960px,#070707_1920px)]">
      <div className="flex w-[60px] items-center justify-center">
        <svg width="20" height="20" viewBox="0 0 20 20" fill="#fff">
          <path d="M0 2.800l8.300-1.200v8H0zM9.200 1.500L20 0v9.600H9.200zM0 10.400h8.300v8L0 17.200zM9.200 10.400H20V20L9.200 18.500z" />
        </svg>
      </div>
      <div className="flex w-[63px] items-center pl-[20px]">
        <svg width="21" height="25" viewBox="0 0 21 25" fill="none" stroke="#fff" strokeWidth="1.500">
          <circle cx="13" cy="9" r="6.800" />
          <path d="M8.500 14L1 22" />
        </svg>
      </div>
      {icons.map((i) => (
        <div key={i.id} className={"relative flex w-[62px] shrink-0 items-center justify-center " + (i.active ? "bg-[#3e3e3e]" : "")}>
          {i.art}
          {i.open && (
            <span className={"absolute bottom-0 h-[3px] bg-[#ff949c] " + (i.active ? "w-full" : "w-[51px]")} />
          )}
        </div>
      ))}
      <div className="flex-1" />
      <div className="flex shrink-0 items-center text-white">
        <svg width="18" height="10" viewBox="0 0 18 10" className="mr-[12px]"><path d="M1 9l8-8 8 8" stroke="#fff" strokeWidth="1.400" fill="none" /></svg>
        <svg width="20" height="12" viewBox="0 0 20 12" className="mr-[12px]">
          <rect x="0.600" y="1" width="17" height="10" fill="none" stroke="#fff" strokeWidth="1.200" />
          <rect x="2" y="2.500" width="7" height="7" fill="#fff" /><rect x="18" y="4" width="1.500" height="4" fill="#fff" />
        </svg>
        <svg width="17" height="16" viewBox="0 0 17 16" className="mr-[11px]" fill="none" stroke="#d9d9d9" strokeWidth="1.200">
          <path d="M1 15.500A15 15 0 0 1 16 1M4.500 15.500A11.500 11.500 0 0 1 16 5M8 15.500A8 8 0 0 1 16 8.500M11 15.500A5 5 0 0 1 16 11.500" />
          <circle cx="14.500" cy="14.300" r="1.200" fill="#fff" />
        </svg>
        <svg width="20" height="15" viewBox="0 0 20 15" className="mr-[14px]" fill="none" stroke="#fff" strokeWidth="1.200">
          <path d="M1 4.500h2.500L7 1v13L3.500 10.500H1zM11 4l7 7M18 4l-7 7" />
        </svg>
        <div className="mr-[22px] w-[70px] text-center font-['Open_Sans','Noto_Sans',sans-serif] text-[14px] leading-[23px] tracking-[-0.1px] whitespace-nowrap">
          <div>1:04 PM</div>
          <div>3/25/2020</div>
        </div>
        <svg width="21" height="21" viewBox="0 0 21 21" className="mr-[25px]" fill="none" stroke="#fff" strokeWidth="1.300">
          <path d="M1 1h19v15.500h-6.500L10.500 19.500l-3-3H1z" />
        </svg>
        <div className="mr-[5px] h-[50px] w-px bg-[#5e5e5e]" />
      </div>
    </div>
  );
}

export default function App() {
  return (
    <div className="flex h-[1080px] w-[1920px] flex-col overflow-hidden bg-[#a2a2a2] font-['DejaVu_Sans',sans-serif] text-black">
      <TitleBar />
      <Toolbar />
      <div className="flex h-[413px] shrink-0">
        <ModuleColumn />
        <Charts />
        <VScroll tail="h-[371px]" thumb="h-[137px]" />
      </div>
      <TimelineToolbar />
      <Ruler />
      <Timeline />
      <HScroll />
      <Taskbar />
    </div>
  );
}
